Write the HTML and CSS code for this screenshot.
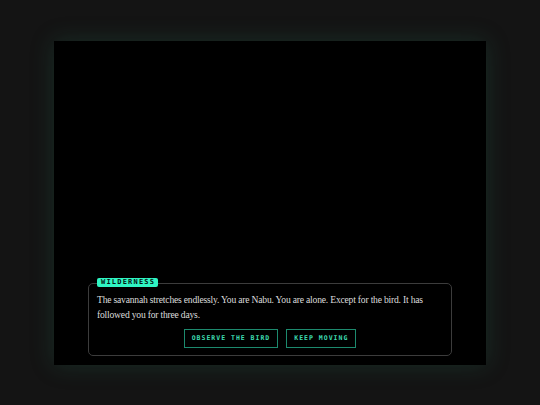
FILE: index.html
```html
<!DOCTYPE html>
<html>
<head>
<meta charset="utf-8">
<link rel="stylesheet" href="styles.css">
</head>
<body>
<div class="page">
  <div class="stage">
    <div class="dialog">
      <span class="tag">WILDERNESS</span>
      <p class="story">The savannah stretches endlessly. You are Nabu. You are alone. Except for the bird. It has followed you for three days.</p>
      <div class="choices">
        <button class="choice">OBSERVE THE BIRD</button>
        <button class="choice">KEEP MOVING</button>
      </div>
    </div>
  </div>
</div>
</body>
</html>
```
FILE: styles.css
```css
html, body {
  margin: 0;
  padding: 0;
  background: #141414;
}
.page {
  width: 540px;
  height: 405px;
  display: flex;
  align-items: center;
  justify-content: center;
}
.stage {
  width: 432px;
  height: 324px;
  background: #000;
  box-shadow: 0 0 22px rgba(40, 110, 85, 0.28);
  display: flex;
  flex-direction: column;
  justify-content: flex-end;
  padding: 0 34px 9px;
  box-sizing: border-box;
}
.dialog {
  position: relative;
  border: 1px solid #3c3c3c;
  border-radius: 5px;
  padding: 8px 8px 7px 8px;
}
.tag {
  position: absolute;
  top: -6px;
  left: 8px;
  background: #2ff5c3;
  color: #04140f;
  font-family: "DejaVu Sans Mono", monospace;
  font-weight: bold;
  font-size: 7px;
  line-height: 9px;
  letter-spacing: 1.2px;
  padding: 0 3px 0 4px;
  border-radius: 2px;
}
.story {
  margin: 0;
  font-family: "Liberation Serif", serif;
  font-size: 9.6px;
  letter-spacing: -0.2px;
  line-height: 15px;
  color: #dcdcdc;
}
.choices {
  display: flex;
  justify-content: center;
  gap: 8px;
  margin-top: 7px;
}
.choice {
  background: transparent;
  border: 1px solid #1d8a6e;
  color: #3ddbb1;
  font-family: "DejaVu Sans Mono", monospace;
  font-weight: bold;
  font-size: 6.5px;
  letter-spacing: 1px;
  height: 19px;
  padding: 0 7px;
  margin: 0;
}
```
